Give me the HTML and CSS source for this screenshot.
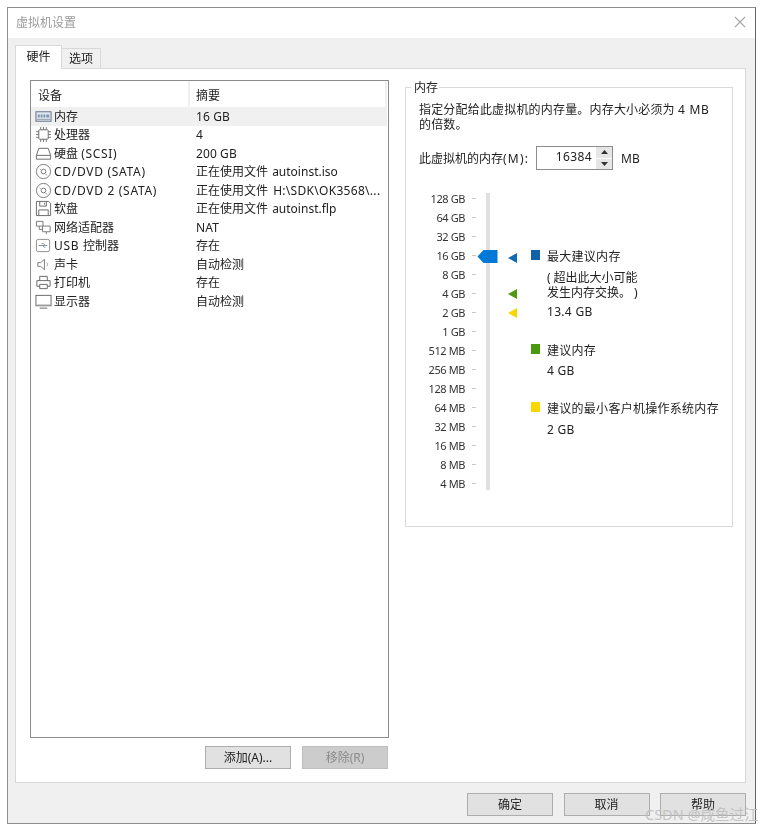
FILE: index.html
```html
<!DOCTYPE html>
<html lang="zh-CN">
<head>
<meta charset="utf-8">
<title>虚拟机设置</title>
<link rel="stylesheet" href="styles.css">
</head>
<body>
<div class="window">
  <header class="titlebar">
    <span class="title">虚拟机设置</span>
    <svg class="close" viewBox="0 0 12 12"><path d="M1 1l10 10M11 1L1 11"/></svg>
  </header>
  <div class="tabs">
    <div class="tab active">硬件</div>
    <div class="tab">选项</div>
  </div>
  <main class="panel">
    <section class="left">
      <div class="list">
        <div class="list-head"><div class="col-a">设备</div><div class="col-b">摘要</div></div>
        <div class="row selected">
          <svg class="ico" viewBox="0 0 18 18"><rect x="1" y="4" width="16" height="10" fill="#dfe8f2" stroke="#5f6f80"/><path d="M3 7h2v3H3zM6 7h2v3H6zM9 7h2v3H9zM12 7h3v3h-3z" fill="#7b93ad"/><path d="M2 12h14" stroke="#8a9aa8"/></svg>
          <span class="name">内存</span><span class="sum sum-lat">16 GB</span>
        </div>
        <div class="row">
          <svg class="ico" viewBox="0 0 18 18"><rect x="4" y="4" width="10" height="10" rx="1" fill="#fff" stroke="#666"/><path d="M1 6h3M1 9h3M1 12h3M14 6h3M14 9h3M14 12h3M6 1v3M9 1v3M12 1v3M6 14v3M9 14v3M12 14v3" stroke="#777"/></svg>
          <span class="name">处理器</span><span class="sum">4</span>
        </div>
        <div class="row">
          <svg class="ico" viewBox="0 0 18 18"><path d="M1.500 11L4 3.500h10L16.500 11v4h-15zM1.500 11h15" fill="#fff" stroke="#666"/></svg>
          <span class="name">硬盘 <span class="lat">(SCSI)</span></span><span class="sum sum-lat">200 GB</span>
        </div>
        <div class="row">
          <svg class="ico" viewBox="0 0 18 18"><circle cx="9" cy="9" r="7.500" fill="#fff" stroke="#777"/><circle cx="9" cy="9" r="2.500" fill="#fff" stroke="#777"/><path d="M5 6l2 2M11 12l2 1" stroke="#aaa"/></svg>
          <span class="name lat">CD/DVD (SATA)</span><span class="sum">正在使用文件 <span class="file">autoinst.iso</span></span>
        </div>
        <div class="row">
          <svg class="ico" viewBox="0 0 18 18"><circle cx="9" cy="9" r="7.500" fill="#fff" stroke="#777"/><circle cx="9" cy="9" r="2.500" fill="#fff" stroke="#777"/><path d="M5 6l2 2M11 12l2 1" stroke="#aaa"/></svg>
          <span class="name lat">CD/DVD 2 (SATA)</span><span class="sum">正在使用文件 <span class="file path">H:\SDK\OK3568\...</span></span>
        </div>
        <div class="row">
          <svg class="ico" viewBox="0 0 18 18"><path d="M1.500 1.500h13l2 2v13h-15z" fill="#fff" stroke="#666"/><path d="M5 1.500v5h7v-5M10 3v2M4 16.500v-6h10v6" fill="none" stroke="#666"/></svg>
          <span class="name">软盘</span><span class="sum">正在使用文件 <span class="file">autoinst.flp</span></span>
        </div>
        <div class="row">
          <svg class="ico" viewBox="0 0 18 18"><path d="M1.500 2.500h7v5h-7zM8 7.500h8v6H8zM4.500 7.500V11H8M12 13.500V16" fill="#fff" stroke="#777"/></svg>
          <span class="name">网络适配器</span><span class="sum sum-lat">NAT</span>
        </div>
        <div class="row">
          <svg class="ico" viewBox="0 0 18 18"><rect x="1.500" y="2.500" width="14" height="13" rx="2" fill="#fff" stroke="#888"/><path d="M4 9h9M11 9l-2-2H7M8 9l2 2h1" fill="none" stroke="#7a8a99"/></svg>
          <span class="name lat">USB <span class="cjk">控制器</span></span><span class="sum">存在</span>
        </div>
        <div class="row">
          <svg class="ico" viewBox="0 0 18 18"><path d="M3 7h3l4-3.500v11L6 11H3z" fill="#fff" stroke="#777"/><path d="M12.500 7c1 1 1 3 0 4" fill="none" stroke="#999"/></svg>
          <span class="name">声卡</span><span class="sum">自动检测</span>
        </div>
        <div class="row">
          <svg class="ico" viewBox="0 0 18 18"><path d="M5 7V2.500h8V7M5 13H2V7h14v6h-3M5 11h8v4.500H5z" fill="#fff" stroke="#666"/></svg>
          <span class="name">打印机</span><span class="sum">存在</span>
        </div>
        <div class="row">
          <svg class="ico" viewBox="0 0 18 18"><rect x="1" y="2.500" width="16" height="11" fill="#fff" stroke="#666"/><path d="M2 12.500h14" stroke="#bbb"/><path d="M5 16h8" stroke="#666"/></svg>
          <span class="name">显示器</span><span class="sum">自动检测</span>
        </div>
      </div>
      <div class="list-actions">
        <button class="btn">添加(A)...</button>
        <button class="btn disabled">移除(R)</button>
      </div>
    </section>
    <fieldset class="group">
      <legend>内存</legend>
      <p class="desc">指定分配给此虚拟机的内存量。内存大小必须为 <span class="lat">4 MB</span><br>的倍数。</p>
      <div class="spin-row">
        <span class="spin-label">此虚拟机的内存<span class="spin-key">(M):</span></span>
        <div class="spin">
          <span class="spin-value">16384</span>
          <div class="spin-btns">
            <span class="spin-btn"><svg viewBox="0 0 7 4"><path d="M3.500 0L7 4H0z"/></svg></span>
            <span class="spin-btn"><svg viewBox="0 0 7 4"><path d="M0 0h7L3.500 4z"/></svg></span>
          </div>
        </div>
        <span class="spin-unit">MB</span>
      </div>
      <div class="scale-area">
        <div class="scale">
          <div class="mark">128 GB</div><div class="mark">64 GB</div><div class="mark">32 GB</div><div class="mark">16 GB</div>
          <div class="mark">8 GB</div><div class="mark">4 GB</div><div class="mark">2 GB</div><div class="mark">1 GB</div>
          <div class="mark">512 MB</div><div class="mark">256 MB</div><div class="mark">128 MB</div><div class="mark">64 MB</div>
          <div class="mark">32 MB</div><div class="mark">16 MB</div><div class="mark">8 MB</div><div class="mark">4 MB</div>
        </div>
        <div class="track">
          <svg class="thumb" viewBox="0 0 20 13"><path d="M0 6.500L6 0h14v13H6z"/></svg>
        </div>
        <div class="arrows">
          <svg class="arrow a-blue" viewBox="0 0 9 10"><path d="M0 5l9-5v10z"/></svg>
          <svg class="arrow a-green" viewBox="0 0 9 10"><path d="M0 5l9-5v10z"/></svg>
          <svg class="arrow a-yellow" viewBox="0 0 9 10"><path d="M0 5l9-5v10z"/></svg>
        </div>
        <div class="legend-col">
          <div class="item item-blue">
            <div class="item-head"><i class="sq blue"></i><span>最大建议内存</span></div>
            <p class="note"><span class="paren">(</span>超出此大小可能<br>发生内存交换。 )</p>
            <p class="val">13.4 GB</p>
          </div>
          <div class="item item-green">
            <div class="item-head"><i class="sq green"></i><span>建议内存</span></div>
            <p class="val">4 GB</p>
          </div>
          <div class="item item-yellow">
            <div class="item-head"><i class="sq yellow"></i><span>建议的最小客户机操作系统内存</span></div>
            <p class="val">2 GB</p>
          </div>
        </div>
      </div>
    </fieldset>
  </main>
  <footer class="footer">
    <button class="btn">确定</button>
    <button class="btn">取消</button>
    <button class="btn">帮助</button>
  </footer>
</div>
<div class="watermark">CSDN @咸鱼过江</div>
</body>
</html>
```
FILE: styles.css
```css
* { box-sizing: border-box; }
html, body { margin: 0; height: 100%; }
body {
  background: #fff;
  padding: 7px 9px 4px 7px;
  font: 12px/15px "Noto Sans", "Noto Sans CJK SC", sans-serif;
  color: #222;
  overflow: hidden;
  position: relative;
}
.window {
  height: 817px;
  border: 1px solid #8e8e8e;
  border-right-color: #666;
  background: #f0f0f0;
  display: flex;
  flex-direction: column;
  filter: blur(0.3px);
}
.titlebar {
  height: 30px;
  flex: none;
  background: #fff;
  display: flex;
  align-items: center;
  justify-content: space-between;
  padding: 0 9px 2px 8px;
}
.title { color: #9a9a9a; }
.close { width: 12px; height: 12px; fill: none; stroke: #aaa; stroke-width: 1.200; }
.tabs {
  height: 30px;
  flex: none;
  display: flex;
  align-items: flex-end;
  padding: 0 0 0 7px;
  position: relative;
  z-index: 1;
}
.tab {
  height: 20px;
  width: 39px;
  border: 1px solid #d9d9d9;
  border-left: 0;
  border-bottom: 0;
  background: #f0f0f0;
  text-align: center;
  line-height: 20px;
}
.tab.active {
  height: 24px;
  width: 47px;
  background: #fff;
  border-left: 1px solid #d9d9d9;
  line-height: 22px;
  padding-bottom: 0;
  margin-bottom: -1px;
}
.panel {
  height: 715px;
  flex: none;
  margin: 0 9px 0 7px;
  background: #fff;
  border: 1px solid #d9d9d9;
  display: flex;
  padding: 11px 12px 0 14px;
  gap: 16px;
}
.left { width: 359px; flex: none; }
.list {
  height: 658px;
  border: 1px solid #8c8c8c;
  background: #fff;
}
.list-head { display: flex; height: 26px; line-height: 29px; }
.col-a {
  width: 159px;
  padding-left: 7px;
  border-right: 2px solid #f0f0f0;
}
.col-b { flex: 1; padding-left: 6px; border-right: 2px solid #f0f0f0; margin-right: 1px; }
.row {
  height: 18.500px;
  display: flex;
  align-items: center;
  margin-right: 1px;
}
.row.selected { background: #f0f0f0; }
.ico { width: 17px; height: 17px; margin-left: 4px; flex: none; }
.name { width: 144px; flex: none; padding-left: 2px; }
.sum { white-space: nowrap; }
.lat { letter-spacing: .7px; }
.sum-lat { letter-spacing: .1px; }
.cjk { letter-spacing: 0; }
.file { margin-left: 1px; }
.path { letter-spacing: .3px; margin-left: 2px; }
.list-actions {
  display: flex;
  justify-content: flex-end;
  gap: 11px;
  margin: 8px 1px 0 0;
}
.btn {
  width: 86px;
  height: 23px;
  padding: 0;
  background: #e1e1e1;
  border: 1px solid #adadad;
  font: inherit;
  color: #222;
}
.btn.disabled { background: #cccccc; border-color: #bfbfbf; color: #8a8a8a; }
.group {
  width: 329px;
  height: 447px;
  margin: 0;
  padding: 0 0 0 13px;
  border: 1px solid #d9d9d9;
  min-width: 0;
}
.group legend { margin-left: -8px; line-height: 15px; padding: 0 1px 0 3px; }
.desc { margin: 7px 0 0; line-height: 15px; white-space: nowrap; letter-spacing: .18px; }
.spin-row { display: flex; align-items: center; margin-top: 14px; height: 24px; }
.spin-label { width: 117px; flex: none; }
.spin-key { letter-spacing: 1.200px; }
.spin {
  width: 77px;
  height: 24px;
  border: 1px solid #8c8c8c;
  display: flex;
  flex: none;
  background: #fff;
}
.spin-value { flex: 1; text-align: right; padding-right: 4px; line-height: 19px; letter-spacing: .4px; }
.spin-btns { width: 16px; display: flex; flex-direction: column; gap: 1px; flex: none; }
.spin-btn { flex: 1; background: #e6e6e6; display: flex; align-items: center; justify-content: center; }
.spin-btn svg { width: 7px; height: 4px; fill: #333; }
.spin-unit { margin-left: 8px; }
.scale-area { display: flex; margin-top: 23px; height: 298px; }
.scale { width: 57px; flex: none; margin-top: -4px; }
.mark {
  height: 19px;
  line-height: 19px;
  font-size: 11px;
  letter-spacing: -.4px;
  text-align: right;
  white-space: nowrap;
  padding-right: 11px;
  position: relative;
  color: #333;
}
.mark::after {
  content: "";
  position: absolute;
  right: 0;
  top: 9px;
  width: 4px;
  height: 1px;
  background: #c9c9c9;
}
.track {
  width: 4px;
  margin-left: 10px;
  height: 297px;
  background: #e0e0e0;
  flex: none;
  position: relative;
}
.thumb {
  position: absolute;
  left: -9px;
  top: 57px;
  width: 21px;
  height: 13px;
  fill: #0078d7;
}
.arrows {
  width: 9px;
  margin-left: 18px;
  flex: none;
  padding-top: 60px;
  display: flex;
  flex-direction: column;
}
.arrow { width: 9px; height: 10px; flex: none; }
.a-blue { fill: #0f6cb0; }
.a-green { fill: #4f9a10; margin-top: 26px; }
.a-yellow { fill: #f5d800; margin-top: 9px; }
.legend-col { margin-left: 14px; padding-top: 54px; white-space: nowrap; }
.item-head { display: flex; align-items: center; gap: 7px; }
.item-head span { line-height: 16px; margin-top: 2px; letter-spacing: .28px; }
.sq { width: 9px; height: 10px; margin-top: -3px; flex: none; }
.sq.blue { background: #0f62a8; }
.sq.green { background: #4a9a10; }
.sq.yellow { background: #f8d800; }
.note { margin: 5px 0 0 16px; line-height: 15px; }
.paren { letter-spacing: 3px; }
.val { margin: 5px 0 0 16px; line-height: 15px; letter-spacing: .3px; }
.item-blue .val { margin-top: 4px; }
.item-green { margin-top: 22px; }
.item-green .val { margin-top: 4px; }
.item-yellow { margin-top: 21px; }
.item-yellow .val { margin-top: 5px; }
.footer {
  flex: 1;
  display: flex;
  justify-content: flex-end;
  gap: 10.500px;
  padding: 10px 9px 0 0;
}
.watermark {
  position: absolute;
  left: 645px;
  top: 805px;
  font-size: 14.500px;
  line-height: 18px;
  color: rgba(190, 190, 190, .9);
  white-space: nowrap;
}
```
